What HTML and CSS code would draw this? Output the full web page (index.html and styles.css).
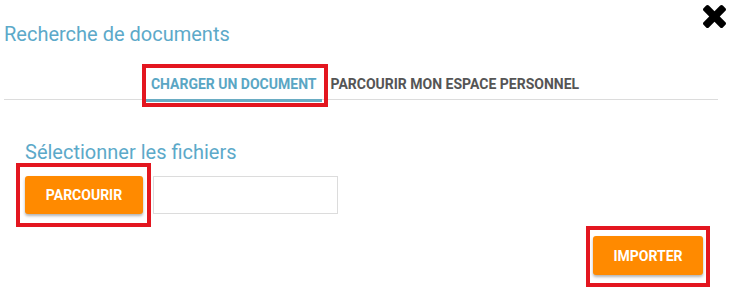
FILE: index.html
```html
<!DOCTYPE html>
<html lang="fr">
<head>
    <meta charset="UTF-8">
    <title>Recherche de documents</title>
    <link rel="stylesheet" href="styles.css">
</head>
<body>
<div class="dialog">
    <div class="head">
        <h2 class="title">Recherche de documents</h2>
        <span class="close">
            <svg width="23" height="23" viewBox="110 366 1188 1188"><path d="M1298 1322q0 40-28 68l-136 136q-28 28-68 28t-68-28l-294-294-294 294q-28 28-68 28t-68-28l-136-136q-28-28-28-68t28-68l294-294-294-294q-28-28-28-68t28-68l136-136q28-28 68-28t68 28l294 294 294-294q28-28 68-28t68 28l136 136q28 28 28 68t-28 68l-294 294 294 294q28 28 28 68z" fill="#000"/></svg>
        </span>
    </div>

    <div class="tabs">
        <a class="tab active marked mark-tab">Charger un document</a>
        <a class="tab">Parcourir mon espace personnel</a>
    </div>

    <div class="upload">
        <h3 class="label">Sélectionner les fichiers</h3>
        <div class="picker">
            <button class="btn btn-browse marked mark-browse">Parcourir</button>
            <input class="file-name" type="text" readonly>
        </div>
    </div>

    <div class="foot">
        <button class="btn btn-import marked mark-import">Importer</button>
    </div>
</div>
</body>
</html>
```

FILE: styles.css
```css
* {
    margin: 0;
    padding: 0;
    box-sizing: border-box;
}

body {
    background: #fff;
    font-family: Roboto, "Liberation Sans", sans-serif;
}

.dialog {
    width: 735px;
    height: 301px;
}

.head {
    display: flex;
    justify-content: space-between;
    align-items: flex-start;
    padding: 5px 9px 0 4px;
}

.title {
    margin-top: 18px;
    font-size: 20px;
    line-height: 22px;
    font-weight: 400;
    color: #5ca9c9;
}

.close {
    display: block;
    width: 23px;
    height: 23px;
}

.close svg {
    display: block;
}

.tabs {
    display: flex;
    justify-content: center;
    gap: 4px;
    margin: 23px 17px 0 4px;
    padding-left: 8px;
    border-bottom: 1px solid #dcdcdc;
}

.tab {
    display: block;
    padding: 8px 5px 7px;
    margin-bottom: -3px;
    font-size: 14px;
    line-height: 16px;
    font-weight: 700;
    text-transform: uppercase;
    color: #555;
    border-bottom: 3px solid transparent;
}

.tab.active {
    color: #5aa6c4;
    border-bottom-color: #6aacc3;
}

.upload {
    padding: 41px 0 0 25px;
}

.label {
    font-size: 20px;
    line-height: 22px;
    font-weight: 400;
    color: #5ca9c9;
}

.picker {
    display: flex;
    gap: 10px;
    margin-top: 13px;
}

.btn {
    display: block;
    height: 38px;
    border: none;
    border-radius: 3px;
    background: #ff8a00;
    color: #fff;
    font-family: Roboto, "Liberation Sans", sans-serif;
    font-size: 14px;
    font-weight: 700;
    text-transform: uppercase;
    box-shadow: 0 2px 3px rgba(0, 0, 0, 0.3);
}

.btn-browse {
    width: 118px;
}

.file-name {
    width: 185px;
    height: 38px;
    border: 1px solid #dcdcdc;
    outline: none;
}

.foot {
    display: flex;
    justify-content: flex-end;
    margin-top: 22px;
    padding-right: 32px;
}

.btn-import {
    width: 110px;
    height: 39px;
}

/* red annotation frames */
.marked {
    position: relative;
}

.marked::after {
    content: "";
    position: absolute;
    border: 4px solid #e3161f;
    pointer-events: none;
}

.mark-tab::after {
    top: -4px;
    left: -4px;
    right: -6px;
    bottom: -8px;
}

.mark-browse::after {
    top: -13px;
    left: -9px;
    right: -8px;
    bottom: -13px;
}

.mark-import::after {
    top: -10px;
    left: -7px;
    right: -7px;
    bottom: -12px;
}
```
